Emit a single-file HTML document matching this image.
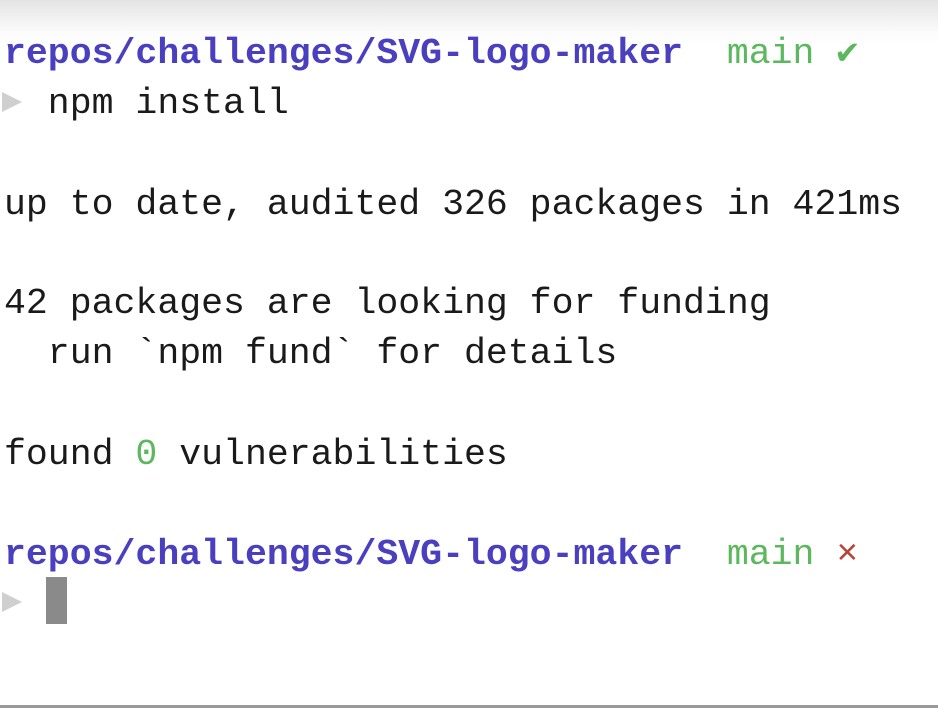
<!DOCTYPE html>
<html><head><meta charset="utf-8"><style>
html,body{margin:0;padding:0}
body{width:938px;height:708px;overflow:hidden;position:relative;background:#fff;
background-image:linear-gradient(#e4e4e4 0px,#fbfbfb 32px,#fff 45px);}
.l{position:absolute;left:4px;height:50px;line-height:50px;font-family:"Liberation Mono",monospace;font-size:36.5px;color:#1a1a1a;white-space:pre}
.b{color:#4a3fbf;font-weight:bold}
.g{color:#5cb85c}
.r{color:#b5473a}
.tri{position:absolute;left:2px;width:0;height:0;border-top:10px solid transparent;border-bottom:10px solid transparent;border-left:20px solid #cfcfcf}
.cur{position:absolute;left:46px;top:577px;width:21px;height:47px;background:#8a8a8a}
.bot{position:absolute;left:0;right:0;top:705px;height:3px;background:#9a9a9a}
</style></head><body>
<div class="l" style="top:29px"><span class="b">repos/challenges/SVG-logo-maker</span>  <span class="g">main ✔</span></div>
<div class="tri" style="top:92px"></div>
<div class="l" style="top:79px">  npm install</div>
<div class="l" style="top:180px">up to date, audited 326 packages in 421ms</div>
<div class="l" style="top:279px">42 packages are looking for funding</div>
<div class="l" style="top:329px">  run `npm fund` for details</div>
<div class="l" style="top:430px">found <span class="g">0</span> vulnerabilities</div>
<div class="l" style="top:530px"><span class="b">repos/challenges/SVG-logo-maker</span>  <span class="g">main</span> <span class="r">×</span></div>
<div class="tri" style="top:592px"></div>
<div class="cur"></div>
<div class="bot"></div>
</body></html>
